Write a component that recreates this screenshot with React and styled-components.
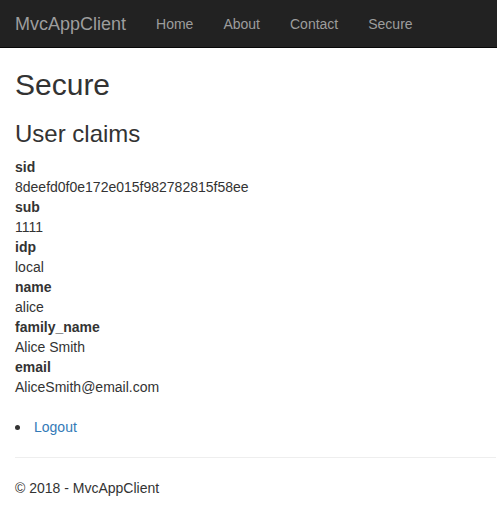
import React from "react";
import styled, { createGlobalStyle } from "styled-components";

const Global = createGlobalStyle`
  html, body { margin: 0; padding: 0; background: #fff; }
  body {
    font-family: "Liberation Sans", Arial, Helvetica, sans-serif;
    font-size: 14px;
    line-height: 1.428571429;
    color: #333;
  }
  * { box-sizing: border-box; }
`;

const Navbar = styled.nav`
  display: flex;
  align-items: flex-start;
  height: 48px;
  background: #222;
  border-bottom: 1px solid #080808;
  padding: 0;
`;

const Brand = styled.a`
  display: block;
  padding: 14px 15px;
  font-size: 18px;
  line-height: 20px;
  color: #9d9d9d;
  text-decoration: none;
`;

const NavList = styled.ul`
  display: flex;
  margin: 0;
  padding: 0;
  list-style: none;
`;

const NavLink = styled.a`
  display: block;
  padding: 14px 15px;
  font-size: 14px;
  line-height: 20px;
  color: #9d9d9d;
  text-decoration: none;
`;

const Container = styled.div`
  padding: 0 0 0 15px;
`;

const PageTitle = styled.h2`
  font-size: 30px;
  font-weight: 500;
  line-height: 1.1;
  margin: 20px 0 10px;
`;

const SubTitle = styled.h3`
  font-size: 24px;
  font-weight: 500;
  line-height: 1.1;
  margin: 20px 0 10px;
`;

const Claims = styled.dl`
  margin: 0 0 20px;
`;

const Term = styled.dt`
  font-weight: 700;
  line-height: 20px;
`;

const Value = styled.dd`
  margin: 0;
  line-height: 20px;
`;

const Actions = styled.ul`
  margin: 0 0 10px;
  padding: 0;
  list-style: none;
`;

const ActionItem = styled.li`
  display: flex;
  align-items: center;
  line-height: 20px;
  &::before {
    content: "";
    width: 5px;
    height: 5px;
    border-radius: 50%;
    background: #333;
    margin-right: 14px;
  }
`;

const Link = styled.a`
  color: #337ab7;
  text-decoration: none;
`;

const Rule = styled.hr`
  margin: 20px 1px 20px 0;
  border: 0;
  border-top: 1px solid #eee;
`;

const Footer = styled.footer`
  p { margin: 0 0 10px; line-height: 20px; }
`;

const claims = [
  ["sid", "8deefd0f0e172e015f982782815f58ee"],
  ["sub", "1111"],
  ["idp", "local"],
  ["name", "alice"],
  ["family_name", "Alice Smith"],
  ["email", "AliceSmith@email.com"],
];

export default function App() {
  return (
    <>
      <Global />
      <Navbar>
        <Brand href="#">MvcAppClient</Brand>
        <NavList>
          {["Home", "About", "Contact", "Secure"].map((l) => (
            <li key={l}>
              <NavLink href="#">{l}</NavLink>
            </li>
          ))}
        </NavList>
      </Navbar>
      <Container>
        <PageTitle>Secure</PageTitle>
        <SubTitle>User claims</SubTitle>
        <Claims>
          {claims.map(([k, v]) => (
            <React.Fragment key={k}>
              <Term>{k}</Term>
              <Value>{v}</Value>
            </React.Fragment>
          ))}
        </Claims>
        <Actions>
          <ActionItem>
            <Link href="#">Logout</Link>
          </ActionItem>
        </Actions>
        <Rule />
        <Footer>
          <p>© 2018 - MvcAppClient</p>
        </Footer>
      </Container>
    </>
  );
}
